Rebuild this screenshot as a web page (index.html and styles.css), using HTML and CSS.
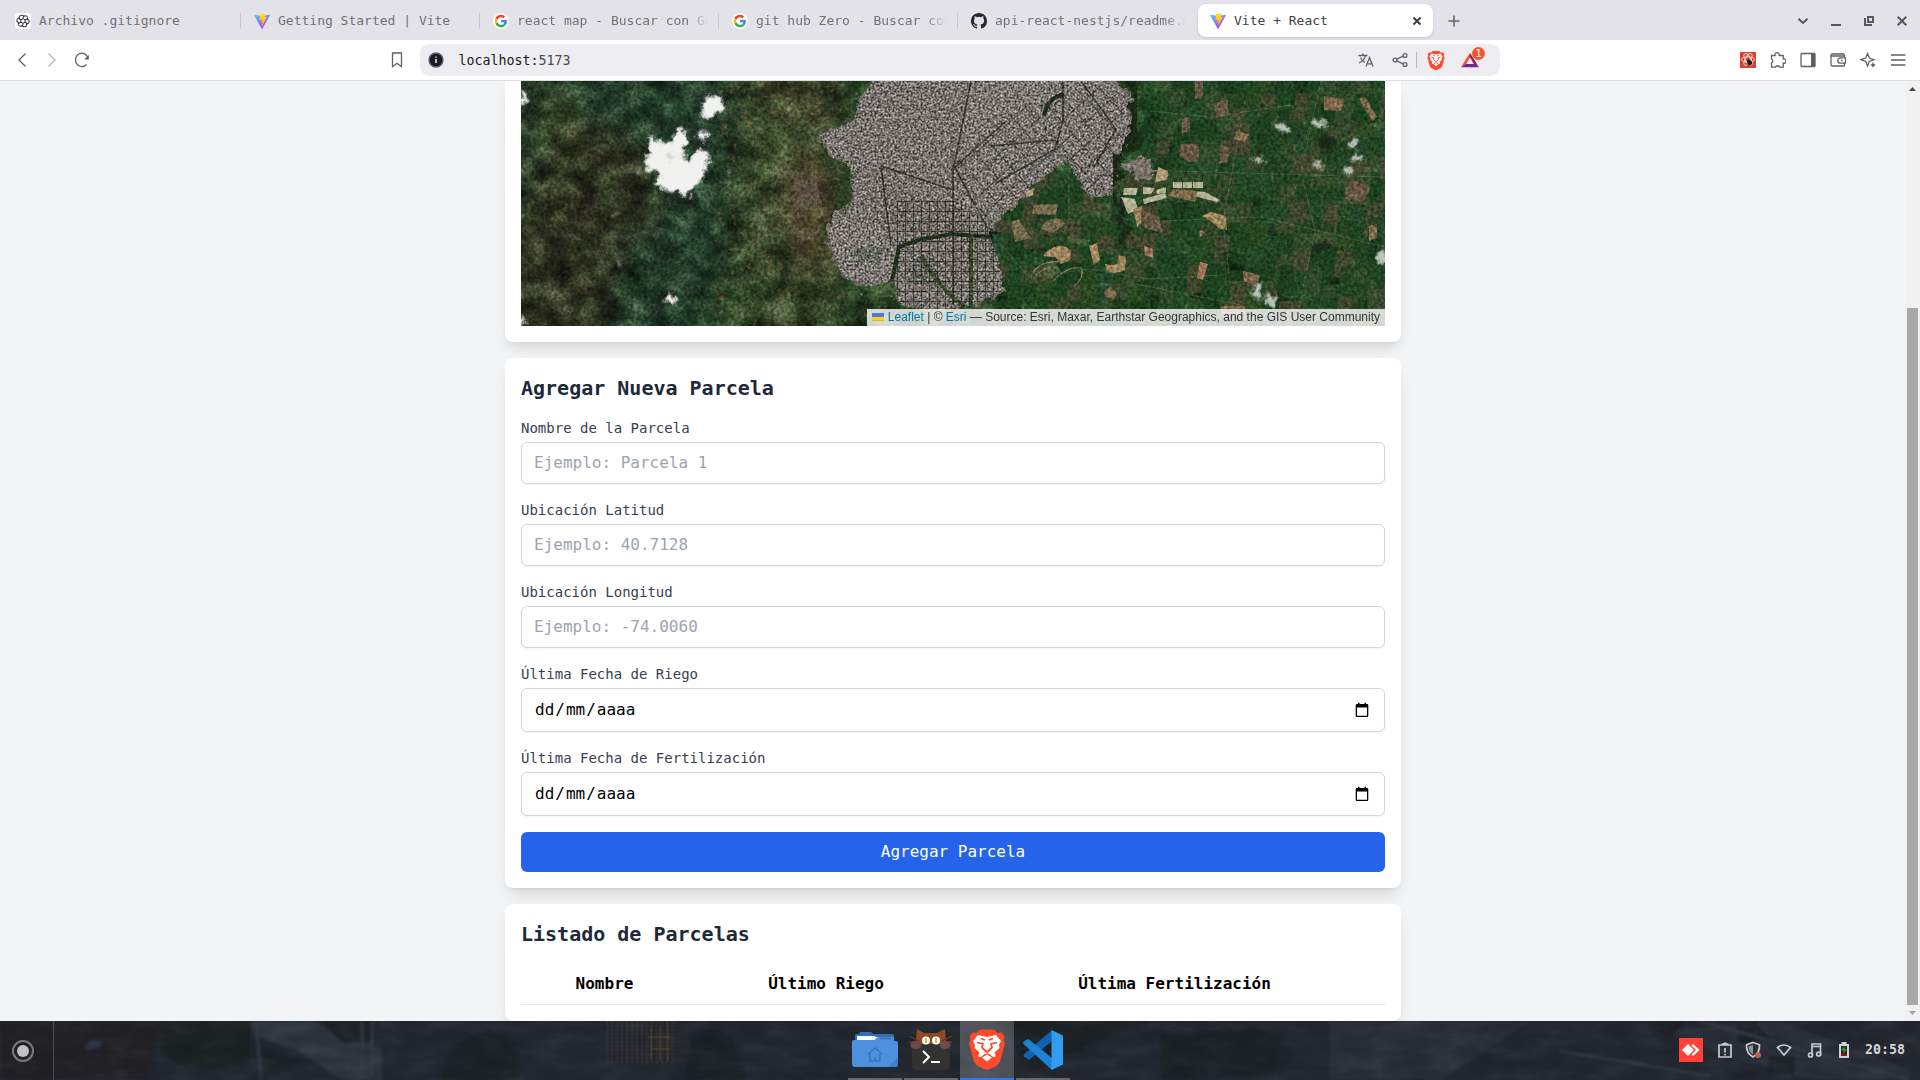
FILE: index.html
```html
<!DOCTYPE html>
<html lang="es">
<head>
<meta charset="utf-8">
<title>Vite + React</title>
<link rel="stylesheet" href="styles.css">
</head>
<body>
<svg class="defs" width="0" height="0" aria-hidden="true">
  <defs>
    <linearGradient id="viteA" x1="0" y1="0" x2="0.6" y2="1"><stop offset="0" stop-color="#41d1ff"/><stop offset="1" stop-color="#bd34fe"/></linearGradient>
    <linearGradient id="viteB" x1="0.5" y1="0" x2="0.5" y2="1"><stop offset="0" stop-color="#ffea83"/><stop offset="0.1" stop-color="#ffdd35"/><stop offset="1" stop-color="#ffa800"/></linearGradient>
    <symbol id="vite" viewBox="0 0 256 257">
      <path fill="url(#viteA)" d="M255.153 37.938L134.897 252.976c-2.483 4.44-8.862 4.466-11.382.048L.875 37.958c-2.746-4.814 1.371-10.646 6.827-9.67l120.385 21.517a6.537 6.537 0 0 0 2.322-.004l117.867-21.483c5.438-.991 9.574 4.796 6.877 9.62Z"/>
      <path fill="url(#viteB)" d="M185.432.063L96.44 17.501a3.268 3.268 0 0 0-2.634 3.014l-5.474 92.456a3.268 3.268 0 0 0 3.997 3.378l24.777-5.718c2.318-.535 4.413 1.507 3.936 3.838l-7.361 36.047c-.495 2.426 1.782 4.5 4.151 3.78l15.304-4.649c2.372-.72 4.652 1.36 4.15 3.788l-11.698 56.621c-.732 3.542 3.979 5.473 5.943 2.437l1.313-2.028l72.516-144.72c1.215-2.423-.88-5.186-3.54-4.672l-25.505 4.922c-2.396.462-4.435-1.77-3.759-4.114l16.646-57.705c.677-2.35-1.37-4.583-3.769-4.113Z"/>
    </symbol>
    <symbol id="google" viewBox="0 0 24 24">
      <circle cx="12" cy="12" r="12" fill="#fff"/>
      <g transform="translate(2.6 2.6) scale(.39)">
        <path fill="#ea4335" d="M24 9.500c3.540 0 6.710 1.220 9.210 3.600l6.850-6.850C35.900 2.380 30.470 0 24 0 14.620 0 6.510 5.380 2.560 13.220l7.980 6.190C12.430 13.720 17.740 9.500 24 9.500z"/>
        <path fill="#4285f4" d="M46.980 24.550c0-1.570-.15-3.090-.38-4.550H24v9.020h12.940c-.58 2.960-2.260 5.480-4.780 7.180l7.730 6c4.510-4.180 7.090-10.360 7.090-17.650z"/>
        <path fill="#fbbc05" d="M10.530 28.590c-.48-1.450-.76-2.990-.76-4.590s.27-3.140.76-4.590l-7.980-6.190C.92 16.460 0 20.120 0 24s.92 7.540 2.560 10.780z"/>
        <path fill="#34a853" d="M24 48c6.480 0 11.930-2.130 15.890-5.810l-7.730-6c-2.150 1.450-4.920 2.300-8.160 2.300-6.260 0-11.570-4.220-13.470-9.910l-7.980 6.190C6.510 42.620 14.620 48 24 48z"/>
      </g>
    </symbol>
    <symbol id="lion" viewBox="0 0 36 40">
      <path fill="#ff4a2b" d="M11 0h14l3.500 3.500 4-.5 3 4-1 3.500L36 14l-5 18-3 4-8 4h-4l-8-4-3-4L0 14l1.500-3.500-1-3.500 3-4 4 .5z"/>
      <path fill="#fff" d="M9 5.500l9 2 9-2 5 6-2 4 .5 3-5 4.500 1.500 4-3 .5-4-3.500-2 .8-2-.8-4 3.500-3-.5 1.500-4-5-4.500.5-3-2-4zM18 25l5 3-5 4-5-4z"/>
      <path fill="none" stroke="#ff4a2b" stroke-width="1.800" d="M8 13l6 1.500-1 3.500 4 4h2l4-4-1-3.500 6-1.500M12 9l4 1.500M24 9l-4 1.500M18 22v2"/>
    </symbol>
    <symbol id="calendar" viewBox="0 0 16 16">
      <path fill="#000" d="M13 2h-1V.8h-1.500V2h-5V.8H4V2H3a1.300 1.300 0 0 0-1.300 1.300V13.700A1.300 1.300 0 0 0 3 15h10a1.300 1.300 0 0 0 1.300-1.300V3.300A1.300 1.300 0 0 0 13 2zm0 11.700H3V5.500h10z"/>
    </symbol>
  </defs>
</svg>

<header class="tabbar">
  <div class="tab"><svg class="favicon" viewBox="0 0 16 16"><rect width="16" height="16" rx="3" fill="#fff"/><g fill="none" stroke="#2c2c2c" stroke-width="1"><path id="petal" d="M8 5.600V3.900L9.800 2.800Q12 2.200 12.600 4.500V7"/><use href="#petal" transform="rotate(60 8 8)"/><use href="#petal" transform="rotate(120 8 8)"/><use href="#petal" transform="rotate(180 8 8)"/><use href="#petal" transform="rotate(240 8 8)"/><use href="#petal" transform="rotate(300 8 8)"/><path d="M8 5.600l2.100 1.200v2.400L8 10.400 5.900 9.200V6.800z"/></g></svg><span class="tab-title">Archivo .gitignore</span></div>
  <div class="tab"><svg class="favicon"><use href="#vite"/></svg><span class="tab-title">Getting Started | Vite</span></div>
  <div class="tab"><svg class="favicon"><use href="#google"/></svg><span class="tab-title fade">react map - Buscar con Go</span></div>
  <div class="tab"><svg class="favicon"><use href="#google"/></svg><span class="tab-title fade">git hub Zero - Buscar con</span></div>
  <div class="tab last"><svg class="favicon" viewBox="0 0 16 16"><path fill="#24292f" d="M8 0C3.580 0 0 3.580 0 8c0 3.540 2.290 6.530 5.470 7.590.4.070.55-.17.55-.38 0-.19-.01-.82-.01-1.490-2.010.37-2.530-.49-2.690-.94-.09-.23-.48-.94-.82-1.130-.28-.15-.68-.52-.01-.53.63-.01 1.080.58 1.230.82.72 1.210 1.870.87 2.330.66.07-.52.28-.87.51-1.070-1.780-.2-3.640-.89-3.640-3.950 0-.87.31-1.590.82-2.150-.08-.2-.36-1.020.08-2.120 0 0 .67-.21 2.200.82a7.500 7.500 0 0 1 4 0c1.530-1.040 2.200-.82 2.200-.82.44 1.100.16 1.920.08 2.120.51.56.82 1.270.82 2.150 0 3.070-1.870 3.750-3.650 3.950.29.25.54.73.54 1.480 0 1.070-.01 1.930-.01 2.200 0 .21.15.46.55.38A8.010 8.010 0 0 0 16 8c0-4.420-3.580-8-8-8z"/></svg><span class="tab-title fade">api-react-nestjs/readme.m</span></div>
  <div class="tab active"><svg class="favicon"><use href="#vite"/></svg><span class="tab-title">Vite + React</span><svg class="tab-close" viewBox="0 0 10 10"><path d="M1.500 1.500l7 7M8.500 1.500l-7 7"/></svg></div>
  <svg class="new-tab" viewBox="0 0 12 12"><path d="M6 .5v11M.5 6h11"/></svg>
  <div class="window-controls">
    <svg viewBox="0 0 12 12"><path d="M1.500 3.800L6 8l4.500-4.200"/></svg>
    <svg viewBox="0 0 12 12"><path d="M1 10h10"/></svg>
    <svg viewBox="0 0 12 12"><path d="M5 2h5v5H5zM2 3v7h7" /></svg>
    <svg viewBox="0 0 12 12"><path d="M1.700 1.700l8.600 8.600M10.300 1.700l-8.600 8.600"/></svg>
  </div>
</header>

<nav class="toolbar">
  <div class="nav-buttons">
    <svg viewBox="0 0 16 16"><path d="M11.500 1.500L5 8l6.500 6.500"/></svg>
    <svg class="disabled" viewBox="0 0 16 16"><path d="M4.500 1.500L11 8l-6.500 6.500"/></svg>
    <svg viewBox="0 0 16 16"><path d="M14 6.500A6.300 6.800 0 1 0 12.500 12.500"/><path class="solid" d="M14.800 3v4.500h-4.500z"/></svg>
  </div>
  <svg class="bookmark" viewBox="0 0 16 16"><path d="M3.500 1h9v13.700L8 11.300l-4.500 3.400z"/></svg>
  <div class="address">
    <svg class="info" viewBox="0 0 16 16"><circle cx="8" cy="8" r="7" fill="#1b1b22"/><path d="M8 7v4M8 4.500v1.300" stroke="#ededf1" stroke-width="1.500"/></svg>
    <span class="url">localhost:<i>5173</i></span>
    <svg class="translate" viewBox="0 0 16 16"><path d="M.5 3.500h9M5 1.500v2M2.500 5.500c1 2.500 2.500 4 4.500 5M7.500 3.500C7 7 4.500 9.500 1 11M8 14.500l3.500-9 3.500 9M9.200 11.800h4.600"/></svg>
    <svg class="share" viewBox="0 0 16 16"><circle cx="3" cy="8" r="1.900"/><circle cx="13" cy="3.500" r="1.900"/><circle cx="13" cy="12.500" r="1.900"/><path d="M4.800 7.200l6.400-3M4.800 8.800l6.400 3"/></svg>
    <span class="address-divider"></span>
    <svg class="shield"><use href="#lion"/></svg>
    <span class="rewards"><svg viewBox="0 0 20 16"><path fill="#ff4724" d="M10 0L0 16l5.500-3L10 5z"/><path fill="#9e1f63" d="M10 0l10 16-5.500-3L10 5z"/><path fill="#662d91" d="M0 16h20l-5.500-3.500h-9z"/></svg><b>1</b></span>
  </div>
  <div class="extensions">
    <svg viewBox="0 0 16 16"><rect class="red" width="16" height="16"/><g class="atom"><ellipse cx="8" cy="7.500" rx="6.500" ry="2.700"/><ellipse cx="8" cy="7.500" rx="6.500" ry="2.700" transform="rotate(60 8 7.500)"/><ellipse cx="8" cy="7.500" rx="6.500" ry="2.700" transform="rotate(120 8 7.500)"/></g><path class="bug" d="M7 8.500l1.500-1.500 3.500 2.500v2.500l-2.500 2-2-1.500z"/></svg>
    <svg viewBox="0 0 16 16"><path d="M1.500 3.500H5a2.200 2.200 0 1 1 4.200 0h4V7a2.200 2.200 0 1 1 0 4.200v4H9.500a2.100 2.100 0 0 0-4 0h-4V11a2.200 2.200 0 0 0 0-4z"/></svg>
    <svg viewBox="0 0 16 16"><rect x="1" y="1.500" width="14" height="13" rx="1"/><path class="fill" d="M11 1.500h4v13h-4z"/></svg>
    <svg viewBox="0 0 16 16"><path d="M14.500 5V3.300A1.300 1.300 0 0 0 13.200 2H2.500A1.500 1.500 0 0 0 1 3.500v9A1.500 1.500 0 0 0 2.500 14h11a1 1 0 0 0 1-1v-1.500M1 4h13.500M15.500 5.800h-5a2.700 2.700 0 0 0 0 5.400h5zM11 8.500h1.500"/></svg>
    <svg viewBox="0 0 16 16"><path d="M7.500 1.500L9.300 6l4.700 1.700-4.700 1.800-1.800 4.500-1.700-4.500L1 7.700 5.800 6z"/><path class="fill" d="M13 10l.9 2.100L16 13l-2.100.9L13 16l-.9-2.100L10 13l2.100-.9z"/></svg>
    <svg viewBox="0 0 16 16"><path d="M1 3h14.500M1 8h14.500M1 13h14.500"/></svg>
  </div>
</nav>

<div class="viewport">
  <main class="page">
    <section class="card map-card">
      <div class="map">
        <svg id="terrain" viewBox="0 0 864 245" width="864" height="245">
          <defs>
            <filter id="grain" x="0" y="0" width="100%" height="100%" color-interpolation-filters="sRGB"><feTurbulence type="fractalNoise" baseFrequency=".3" numOctaves="3" seed="8"/><feColorMatrix values="0 1.300 0 0 -.17  0 1.300 0 0 -.17  0 1.300 0 0 -.17  0 0 0 0 1"/></filter>
            <filter id="hills" x="0" y="0" width="100%" height="100%" color-interpolation-filters="sRGB"><feTurbulence type="fractalNoise" baseFrequency=".04 .05" numOctaves="5" seed="21"/><feColorMatrix values=".2 1.400 0 0 -.3  0 1.500 0 0 -.22  .1 1.300 0 0 -.22  0 0 0 0 1"/></filter>
            <filter id="block" x="0" y="0" width="100%" height="100%" color-interpolation-filters="sRGB"><feTurbulence type="fractalNoise" baseFrequency=".5" numOctaves="2" seed="4"/><feColorMatrix values="0 1.400 0 0 -.2  0 1.400 0 0 -.21  0 1.400 0 0 -.22  0 0 0 0 1"/></filter>
            <filter id="rough" x="-5%" y="-5%" width="110%" height="110%" color-interpolation-filters="sRGB"><feTurbulence type="fractalNoise" baseFrequency=".09" numOctaves="4" seed="3"/><feDisplacementMap in="SourceGraphic" scale="20" xChannelSelector="R" yChannelSelector="G"/></filter>
            <filter id="cloud" x="-5%" y="-5%" width="110%" height="110%" color-interpolation-filters="sRGB"><feTurbulence type="fractalNoise" baseFrequency=".13" numOctaves="4" seed="12" result="n"/><feGaussianBlur in="SourceGraphic" stdDeviation="1.500"/><feDisplacementMap in2="n" scale="12" xChannelSelector="R" yChannelSelector="G"/></filter>
            <filter id="soft" x="-30%" y="-30%" width="160%" height="160%" color-interpolation-filters="sRGB"><feGaussianBlur stdDeviation="14"/></filter>
            <clipPath id="city"><path d="M351 0L339 20 332 40 299 54 312 77 329 84 330 120 312 134 307 154 314 177 322 197 349 205 372 200 379 224 422 229 452 224 482 210 477 177 467 150 496 120 509 107 546 77 559 100 569 117 592 114 594 84 607 64 611 17 589 0z"/></clipPath>
            <pattern id="gridA" width="9" height="7" patternUnits="userSpaceOnUse" patternTransform="rotate(3)"><path d="M0 0H9M0 0V7" stroke="#2d2c26" stroke-width=".8" opacity=".55"/></pattern>
            <pattern id="gridB" width="17" height="17" patternUnits="userSpaceOnUse" patternTransform="rotate(-42)"><path d="M0 0H17M0 0V17" stroke="#292c24" stroke-width="1.500" opacity=".8"/></pattern>
            <pattern id="gridC" width="8" height="10" patternUnits="userSpaceOnUse"><path d="M0 0H8M0 0V10" stroke="#22251e" stroke-width="1.800" opacity=".75"/></pattern>
          </defs>
          <rect width="864" height="245" fill="#263a22"/>
          <g filter="url(#soft)">
            <path fill="#23392a" d="M0-20h220v170l-40 110H0z"/>
            <path fill="#2d2e20" d="M60 40l60 20 20 60-40 60-20 80H-30V150z"/>
            <path fill="#37452b" d="M215 0h110l-10 245H210z"/>
            <path fill="#4c432e" d="M265 60l50 30-10 120-50-50z"/>
            <path fill="#234324" d="M620-20h264v290H480l20-140z"/>
            <path fill="#5a4733" d="M210-20h60l50 60-40 10z" opacity=".5"/>
            <path fill="#57523b" d="M745 60l110-20v130l-90-10z" opacity=".6"/>
            <path fill="#4b5430" d="M20 10h35L40 90 20 70z" opacity=".8"/>
          </g>
          <rect width="864" height="245" filter="url(#hills)" class="blend-soft hills"/>
          <g id="fields"></g>
          <g filter="url(#rough)">
            <path fill="#776c63" d="M351 0L339 20 332 40 299 54 312 77 329 84 330 120 312 134 307 154 314 177 322 197 349 205 372 200 379 224 422 229 452 224 482 210 477 177 467 150 496 120 509 107 546 77 559 100 569 117 592 114 594 84 607 64 611 17 589-8H351z"/>
            <path fill="#7c766c" d="M602 84l14-9 16 4v15l-16 6z"/>
            <path fill="#66594e" d="M270 95l25-2 5 30-26 12z" opacity=".7"/>
            <path fill="#263920" d="M329 170l25-6 14 5-5 12-27 3zM388 182l22-3 10 18-18 12-12-6z"/>
            <path fill="#665647" d="M355 90l40 8 6 50-36 6-18-24zM378 130l50-6 30 20-4 60-50-8z" opacity=".7"/>
            <path fill="#2c4021" d="M318 92l14-4v34l-16 22z"/>
          </g>
          <g clip-path="url(#city)">
            <path d="M325 0h120v150H325z" fill="url(#gridA)"/>
            <path d="M434 87l54-60 110-27 10 110-90 20-40 30z" fill="url(#gridB)"/>
            <path d="M375 120h60l45 30v90H375z" fill="url(#gridC)"/>
            <path d="M450 0L433 85M433 85l34 63M542 0v40l-8 28-60 35M560 0l35 48-22 38M432 85v140M434 86l50-45M360 85l72 24M360 85l10 80M470 65l64-6" fill="none" stroke="#24271d" stroke-width="1.600" opacity=".8"/>
            <path d="M370 205l8-39 23-8 30-5 37 3M523 35q3-18 20-22" fill="none" stroke="#21311c" stroke-width="4"/>
            <path d="M400 175q20 35 45 52M450 155v70" fill="none" stroke="#2b3b1f" stroke-width="4" opacity=".8"/>
            <rect width="864" height="245" filter="url(#block)" class="blend-overlay city-noise"/>
          </g>
          <path d="M611 0q7 20 1 40l-3 24q-14 12-12 22l-3 25 9 24-1 30" fill="none" stroke="#1b2818" stroke-width="6" filter="url(#rough)"/>
          <path d="M382 200l25 10 30 18" fill="none" stroke="#85766b" stroke-width="2"/>
          <g fill="#b3b496">
            <path d="M603 107l14 0-2 7h-13zM622 106l12 1-4 6h-8zM635 109l10-3v6l-9 1zM652 101h9v6h-9zM662 101h9v6h-9zM672 101h10v6h-10zM662 109l22 2 15 8-3 2-34-9zM600 116l14 2 3 10-10 5zM622 118l22-6 2 5-23 6z"/>
            <path fill="#b09b76" d="M637 86l10 4-1 9-12 2zM505 111l8-4-1 7-7 2z"/>
          </g>
          <g>
            <path fill="#766b4d" d="M513 124l24-1-2 11-24-1zM523 142q14-10 22 1l-14 9-10-4zM490 141l8-3 12 19-16 4z"/>
            <path fill="#a0875f" d="M525 171q15-12 25-1l-1 9-9 4-6-7-12-1zM568 165l8-3 3 17-6 5zM584 183q8 2 12 0l2-9 7 2-1 13q-12 6-19 0zM612 128l9-3-1 17-4 4zM681 135l9-4 15 4 1 14-7-1-9-8z"/>
            <path fill="#806a49" d="M676 110l-2 11-27-6 5-7z"/>
            <path fill="#b88261" d="M679 181l8 2-5 16-6-2z" opacity=".85"/>
            <path fill="#80694d" d="M803 15l20 3-3 12-17-1zM838 18l6-2 12 20-5 4zM715 50l13 3-4 8-11-3zM583 212l6-7 7 8-3 5-8-2zM700 225h24v8h-24zM848 145l8-2v14l-8 3zM722 190l17 4-3 9-13-2z"/>
            <path fill="#665845" d="M660 63h18v17l-10 1-10-6zM700 64l8 2-1 15-9 2zM825 105l8-6 16 8-8 14-17-3zM674 0h8v17l-8 1zM661 38l8-2v14l-8 2zM693 22l14-4v16l-12 3zM620 128l18 8 4 16-18-5z"/>
            <path fill="#9a7558" d="M623 165l9 3v9l-8-3zM679 156l-1-7 6 2z"/>
            <path fill="#4e6440" d="M546 155l24 4-6 6-17-5zM523 184l12-3 4 10-10 8-8-5z" opacity=".8"/>
            <path fill="none" stroke="#7b7457" stroke-width="1.300" d="M510 198q2-14 20-17l17-1M532 200q14-15 28-13 4 10-7 18M515 194q10-9 21-8"/>
            <path fill="none" stroke="#6c7855" stroke-width=".7" opacity=".65" d="M548 80v60l-12 25M470 152l38 44 60-8 60 10 74-4M630 30l60 6 80-12M640 140l100-4 124 30M724 20l-22 120 10 90M800 0l-20 90 14 60-20 95M600 200l150 30M648 90l216 6"/>
          </g>
          <rect width="864" height="245" filter="url(#grain)" class="blend-overlay light"/>
          <g id="specks"></g>
          <g filter="url(#cloud)" fill="#151f16" opacity=".7"><path d="M137 102l40 12-3 7-32-4zM172 60l16-8v12l-14 5zM795 60l12-8 8 8-8 14zM140 215l12-4 6 10z"/></g>
          <g filter="url(#cloud)" fill="#f1f1ef">
            <path d="M129 54l15 9 7-3 9-16 8 20-8 8 8 10 10-16 11 10-8 22-15 18-17-6-17-7 9-11-17-5z"/>
            <path d="M182 18l13-4 7 4-1 14-8 1-7 5-5-5zM177 49l10 3-1 9-7-2zM149 212l6 6-3 6-6-5z"/>
            <path d="M0 10h5v14l-6 4zM0 232l4 6-3 9h-4z"/>
            <g opacity=".75"><path d="M756 41l8 1 4 8-6 3-8-6zM793 37l9 2 6 6-8 2-8-4zM732 74l12 4-4 4-8-3zM832 57l6 6-4 6-6-5zM834 72l8 4-4 5-7-2zM824 84l9 6-5 4-6-4zM733 205l6-3 3 8-6 11-5-8zM746 212l10 7-3 9-9-5zM855 173l10-5v14l-8 2zM792 80l10 2-3 4-8-2z"/></g>
          </g>
          <g filter="url(#cloud)" fill="#c2c3bf" opacity=".6"><path d="M150 70l4 5-6 5-3-4zM115 88l5-2-2 7-5-1zM22 104l7 1-5 3zM90 134l9-1-5 4zM97 178l5 5-5 3zM134 150l4 3-3 3z"/></g>
        </svg>
        <div class="attribution"><svg viewBox="0 0 12 8"><path fill="#4c7be1" d="M0 0h12v4H0z"/><path fill="#ffd500" d="M0 4h12v3H0z"/><path fill="#e0bc00" d="M0 7h12v1H0z"/></svg> <a>Leaflet</a> <span>|</span> © <a>Esri</a> — Source: Esri, Maxar, Earthstar Geographics, and the GIS User Community</div>
      </div>
    </section>

    <section class="card">
      <h2>Agregar Nueva Parcela</h2>
      <form class="form">
        <div class="field"><label for="n">Nombre de la Parcela</label><input id="n" type="text" placeholder="Ejemplo: Parcela 1"></div>
        <div class="field"><label for="lat">Ubicación Latitud</label><input id="lat" type="text" placeholder="Ejemplo: 40.7128"></div>
        <div class="field"><label for="lon">Ubicación Longitud</label><input id="lon" type="text" placeholder="Ejemplo: -74.0060"></div>
        <div class="field"><label>Última Fecha de Riego</label><div class="date"><span><i>dd</i>/<i>mm</i>/<i>aaaa</i></span><svg><use href="#calendar"/></svg></div></div>
        <div class="field"><label>Última Fecha de Fertilización</label><div class="date"><span><i>dd</i>/<i>mm</i>/<i>aaaa</i></span><svg><use href="#calendar"/></svg></div></div>
        <button type="button">Agregar Parcela</button>
      </form>
    </section>

    <section class="card">
      <h2>Listado de Parcelas</h2>
      <table>
        <colgroup><col class="c1"><col class="c2"><col class="c3"></colgroup>
        <thead><tr><th>Nombre</th><th>Último Riego</th><th>Última Fertilización</th></tr></thead>
      </table>
    </section>
  </main>
  <div class="scrollbar">
    <svg viewBox="0 0 15 16"><path d="M4 10l3.500-4L11 10z" fill="#444"/></svg>
    <div class="thumb"></div>
    <svg viewBox="0 0 15 16"><path d="M4 6l3.500 4L11 6z" fill="#a3a3a3"/></svg>
  </div>
</div>

<footer class="taskbar">
  <svg class="wallpaper" viewBox="0 0 1920 59" width="1920" height="59" preserveAspectRatio="none">
    <defs>
      <filter id="paint" x="0" y="0" width="100%" height="100%" color-interpolation-filters="sRGB"><feTurbulence type="fractalNoise" baseFrequency=".03 .08" numOctaves="5" seed="7"/><feColorMatrix values="0 1 0 0 -.02  0 1 0 0 -.02  0 1 0 0 -.02  0 0 0 0 1"/></filter>
      <filter id="blur3"><feGaussianBlur stdDeviation="1.500"/></filter>
      <pattern id="weave" width="5" height="4" patternUnits="userSpaceOnUse"><path d="M0 1h4M2 0v4" stroke="#94602a" stroke-width=".8"/></pattern>
    </defs>
    <rect width="1920" height="59" fill="#232730"/>
    <g filter="url(#blur3)">
      <path fill="#202225" d="M0 0h165l-20 59H0z"/><path fill="#1e2123" d="M165 0h85v40l-60 10-30-20z"/>
      <path fill="#2d343d" d="M252 0h60l70 28v31h-40l-45-30-45-15z"/><path fill="#1f2225" d="M318 0h55v22l-30 0zM440 59q10-50 50-50 30 5 30 50zM252 22l60 18-40 10zM690 10q30-10 45 10l10 39h-60zM1000 0h150l-40 18-80 30zM1160 10l130-5-20 50-110 4z"/>
      <path fill="#292f38" d="M1330 0h200l-90 59h-110zM1660 10l120-10 130 49v10h-90l-80-20z"/><path fill="#1e2128" d="M1640 0h45l-15 18zM1735 0h20l15 18-30 5zM1770 35h25v20h-30z"/>
      <path stroke="#343c46" stroke-width="2" d="M256 0l5 59M362 0v55M372 0v55M1700 0l210 59M1560 30l150 25" fill="none"/>
      <path fill="#2b3642" d="M84 26l7-7 12 1-3 6-12 3z"/>
    </g>
    <rect width="1920" height="59" filter="url(#paint)" class="blend-soft faint"/>
    <rect x="606" y="0" width="70" height="44" fill="url(#weave)" opacity=".2"/>
    <path d="M651 6v32M660 4v36M668 2v38M648 16h22M650 28h20" stroke="#8b5a26" opacity=".5"/>
  </svg>
  <div class="launcher"><svg viewBox="0 0 24 24"><circle cx="12" cy="12" r="10" fill="none" stroke="#77797c" stroke-width="2"/><circle cx="12" cy="12" r="6" fill="#bfc1c3"/></svg></div>
  <div class="apps">
    <div class="app"><svg width="46" height="36" viewBox="0 0 46 36"><path fill="#336eb4" d="M3 9V4q0-2 2-2h2l1-2h11l2 2h19q2 0 2 2v6z"/><path fill="#fff" d="M5 4h17l2 1h17v5H5z"/><path fill="#4c90df" d="M2 8h20l4-3h16v4h2q2 0 2 2v21q0 3-3 3H3q-3 0-3-3V10q0-2 2-2z"/><path d="M28 6.500h11" stroke="#336eb4" stroke-width="1.500"/><g fill="none" stroke="#3775bd" stroke-width="1.500"><path d="M15.500 22.500L23 16l7.500 6.500M18 21v8h10v-8M23 29v-4"/></g><path fill="#3d7fce" d="M46 25v7q0 3-3 3h-7z"/></svg></div>
    <div class="app"><svg width="44" height="42" viewBox="0 0 44 42"><path fill="#8d4b25" d="M8 0l7 4h13l8-4 1 12q2 4-1 6H8q-3-3-1-7z"/><path d="M0 7l10 5M0 13h9M2 19l7-5M43 7l-10 5M43 13h-9M41 19l-7-5" stroke="#6b3519" stroke-width="1.300"/><rect x="3" y="15" width="38" height="26" rx="4" fill="#323232"/><ellipse cx="7" cy="16" rx="5.500" ry="4" fill="#6a4c4a"/><ellipse cx="36" cy="16" rx="5.500" ry="4" fill="#6a4c4a"/><circle cx="17" cy="11.500" r="4" fill="#fff"/><circle cx="27" cy="11.500" r="4" fill="#fff"/><path d="M17 9v5M27 9v5" stroke="#bda41c" stroke-width="1.500"/><path d="M14 22l6 6-6 6M22 33h9" fill="none" stroke="#fff" stroke-width="1.900"/></svg></div>
    <div class="app current"><svg width="36" height="41"><use href="#lion"/></svg></div>
    <div class="app"><svg width="40" height="40" viewBox="0 0 40 40"><path fill="#1261b3" d="M29 0v11L6 30 1 26.500q-1-1 0-2z"/><path fill="#1c82d6" d="M6 9.500L29 28v12L0 13.500q0-1 1-2l3-2q1-.6 2 0z"/><path fill="#319cf0" d="M28.500 0L40 5.500v29L28.500 40z"/></svg></div>
  </div>
  <div class="tray">
    <svg width="24" height="24" viewBox="0 0 24 24"><path fill="#ff4136" d="M0 0h24v24H0z"/><path fill="#fff" d="M3 12l6-6 6 6-6 6zM12.500 7.500L14 6l6.500 6-6.500 6-1.500-1.500L17 12z"/></svg>
    <svg width="16" height="18" viewBox="0 0 16 18"><path d="M2 4h12v12H2zM8 7v4.500M8 12.800v1.700M5.500 4.200V3H7q1-2 2 0h1.500v1.200" /></svg>
    <svg width="18" height="18" viewBox="0 0 18 18"><path d="M9 1.500l6.500 2.300q.5 8.500-6.500 12.200Q2 12.300 2.500 3.800z"/><path class="solid" d="M9 4l-4.500 1.500q0 5.500 4.500 8z"/><circle cx="14" cy="14" r="3" class="alert"/></svg>
    <svg width="16" height="16" viewBox="0 0 16 16"><path d="M1.500 5.500Q8 .5 14.500 5.500L8 13z"/></svg>
    <svg width="16" height="16" viewBox="0 0 16 16"><path d="M5 13V2h8.500v10M5 4.500h8.500"/><circle cx="3.500" cy="13" r="2"/><circle cx="11.700" cy="12" r="2"/></svg>
    <svg width="12" height="18" viewBox="0 0 12 18"><path fill="#d0d2d2" stroke="none" d="M3.500 1h5v2H11v14H1V3h2.500z"/><path stroke="none" fill="#282b2b" d="M3 5h6v8H3z"/><path stroke="none" fill="#a50d0d" d="M3 13h6v2H3z"/><path stroke="none" fill="#2ba027" d="M7 5l-4 4.500h3L5 13l4-5H6.500z"/></svg>
    <time>20:58</time>
  </div>
</footer>
<script src="terrain.js"></script>
</body>
</html>
```
FILE: styles.css
```css
* { box-sizing: border-box; }
body { margin: 0; width: 1920px; height: 1080px; overflow: hidden; display: flex; flex-direction: column; font-family: "DejaVu Sans Mono", monospace; background: #f3f4f6; }
svg { display: block; flex: none; }
i { font-style: normal; }
.defs { position: absolute; }

.tabbar { flex: none; height: 40px; padding-top: 1px; display: flex; align-items: center; background: #e3e2e8; }
.tab { width: 239px; height: 16px; padding-left: 13px; display: flex; align-items: center; gap: 8px; font-size: 13px; line-height: 16px; color: #717177; border-right: 1px solid #c9c8ce; }
.tab:first-child { width: 241px; padding-left: 15px; }
.tab.last { border: 0; width: 241px; }
.favicon { width: 16px; height: 16px; }
.tab-title { flex: none; white-space: nowrap; width: 197px; }
.fade { -webkit-mask-image: linear-gradient(90deg, #000 86%, transparent 97%); mask-image: linear-gradient(90deg, #000 86%, transparent 97%); }
.tab.active { width: 235px; height: 33px; margin-left: -1px; padding: 0 11px 0 12px; background: #fff; border: 0; border-radius: 8px; color: #3e3f45; box-shadow: 0 1px 3px #0002; }
.active .tab-title { flex: 1; }
.tab-close { width: 10px; height: 10px; fill: none; stroke: #3b3c42; stroke-width: 2; }
.new-tab { width: 12px; height: 12px; margin-left: 15px; stroke: #67686e; stroke-width: 1.6; }
.window-controls { margin-left: auto; padding-right: 12px; display: flex; gap: 21px; fill: none; stroke: #56575d; stroke-width: 2; }
.window-controls svg { width: 12px; height: 12px; }

.toolbar { flex: none; height: 41px; display: flex; align-items: center; background: #fff; border-bottom: 1px solid #dcdce1; fill: none; stroke: #5f6067; stroke-width: 1.3; }
.toolbar svg { width: 16px; height: 16px; }
.nav-buttons { width: 389px; padding-left: 14px; display: flex; gap: 14px; }
.disabled { opacity: .45; }
.solid { fill: #5f6067; stroke: none; }
.bookmark { margin-right: 15px; }
.address { width: 1080px; height: 32px; padding: 0 15px 0 8px; display: flex; align-items: center; background: #ededf1; border-radius: 9px; }
.url { margin-left: 14.5px; margin-right: auto; font-size: 13.3px; color: #1b1b22; }
.url i { color: #4a4a52; }
.share { margin: 0 8px 0 18px; }
.address-divider { width: 1px; height: 16px; background: #b6b6bd; margin: 0 10px 0 0; }
.toolbar .shield { width: 18px; height: 19px; stroke: none; }
.rewards { position: relative; width: 24px; margin-left: 16px; }
.toolbar .rewards svg { width: 18px; height: 16px; stroke: none; }
.rewards b { position: absolute; right: 0; top: -5px; width: 13px; height: 13px; border-radius: 50%; background: #fb542b; color: #fff; font: 10px/13px "DejaVu Sans Mono", monospace; text-align: center; }
.extensions { margin-left: auto; padding-right: 14px; display: flex; gap: 14px; }
.extensions .fill { fill: #5f6067; stroke: none; }
.extensions .red { fill: #d8432f; stroke: none; }
.extensions .atom { stroke: #f6d5cf; stroke-width: 1; }
.extensions .bug { fill: #22191a; stroke: none; }

.viewport { flex: none; height: 940px; display: flex; overflow: hidden; background: #f3f4f6; }
.page { flex: 1; padding-left: 505px; display: flex; flex-direction: column; gap: 16px; }
.card { flex: none; width: 896px; padding: 16px; background: #fff; border-radius: 8px; box-shadow: 0 10px 15px -3px #0000001a, 0 4px 6px -4px #0000001a; }
.map-card { padding-top: 0; border-radius: 0 0 8px 8px; }
.map { position: relative; height: 245px; overflow: hidden; isolation: isolate; }
.blend-overlay { mix-blend-mode: overlay; }
.blend-soft { mix-blend-mode: soft-light; }
.light { opacity: .45; }
.hills { opacity: .75; }
.city-noise { opacity: .7; }
.faint { opacity: .2; }
.attribution { position: absolute; right: 0; bottom: 0; padding: 0 5px; background: #fffc; color: #333; font: 12px/17px "Liberation Sans", Arial, sans-serif; white-space: nowrap; }
.attribution svg { display: inline; width: 12px; height: 8px; }
.attribution a { color: #0078a8; }
h2 { margin: 0 0 16px; font-size: 20px; line-height: 28px; color: #1f2937; }
.form { display: flex; flex-direction: column; gap: 16px; }
.field { display: flex; flex-direction: column; gap: 4px; }
label { font-size: 14px; line-height: 20px; color: #374151; }
input, .date { width: 100%; height: 42px; padding: 7px 12px 9px; border: 1px solid #d1d5db; border-radius: 6px; background: #fff; box-shadow: 0 1px 2px #0000000d; font: 16px/24px "DejaVu Sans Mono", monospace; }
input::placeholder { color: #9ca3af; opacity: 1; }
.date { height: 44px; padding: 0 14px 0 12px; display: flex; justify-content: space-between; align-items: center; }
.date i { padding: 0 1px; }
.date svg { width: 16px; height: 16px; }
button { height: 40px; border: 0; border-radius: 6px; background: #2563eb; color: #fff; font: 16px/24px "DejaVu Sans Mono", monospace; }
table { width: 100%; border-collapse: collapse; table-layout: fixed; }
.c1 { width: 167px; } .c2 { width: 276px; } .c3 { width: 421px; }
th { padding: 8px 16px; font-size: 16px; line-height: 24px; border-bottom: 1px solid #e5e7eb; }
.scrollbar { width: 15px; display: flex; flex-direction: column; background: #f1f1f1; }
.scrollbar svg { width: 15px; height: 16px; }
.thumb { width: 11px; margin: 211px 2px 0; flex: 1; background: #a8a8a8; }

.taskbar { flex: none; height: 59px; position: relative; isolation: isolate; display: grid; grid-template-columns: 848px 1fr auto; background: #232730; }
.wallpaper { position: absolute; inset: 0; z-index: -1; }
.launcher { width: 54px; padding-left: 11px; display: flex; align-items: center; border-right: 1px solid #4a4c50; }
.launcher svg { width: 24px; height: 24px; }
.apps { display: flex; gap: 2px; }
.app { width: 54px; height: 59px; display: flex; align-items: center; justify-content: center; border-bottom: 2px solid #67696d; }
.app.current { background: #ffffff33; border-color: #2c7be5; }
.tray { display: flex; align-items: center; padding: 0 15px 2px 0; fill: none; stroke: #c9cbcd; stroke-width: 1.7; }
.tray svg { margin-right: 15px; }
.tray svg:first-child { stroke: none; margin-right: 14px; }
.tray svg:nth-child(2) { margin-right: 11px; }
.tray svg:nth-child(3) { margin-right: 14px; }
.tray .solid { fill: #8e9499; }
.tray .alert { fill: #c4643a; stroke: none; }
time { font-size: 13.3px; font-weight: bold; color: #d3d5d7; }
```
FILE: terrain.js
```js
// Deterministic farmland patchwork and bright rooftops for the satellite map.
let seed = 77;
const rnd = () => (seed = (seed * 16807) % 2147483647) / 2147483647;
const make = (parent, points, fill, opacity) => {
  const p = document.createElementNS("http://www.w3.org/2000/svg", "polygon");
  p.setAttribute("points", points);
  p.setAttribute("fill", fill);
  p.setAttribute("opacity", opacity);
  parent.appendChild(p);
};
const fields = document.getElementById("fields");
const greens = ["#1d421f", "#19391b", "#2c4a23", "#354c2d", "#3c4a2d", "#1f4520", "#484832", "#24442300", "#204222", "#24482a"];
for (let x = 470; x < 870; x += 15) {
  for (let y = -8; y < 250; y += 16) {
    if (x < 610 && y < 75) continue;
    const w = 13 + rnd() * 14, h = 12 + rnd() * 18, k = 3 - rnd() * 5;
    const a = x + rnd() * 6, b = y + rnd() * 6;
    make(fields, `${a},${b} ${a + w},${b + k} ${a + w - 3},${b + h} ${a - 3},${b + h - k}`, greens[Math.floor(rnd() * greens.length)], 0.8);
  }
}
for (let n = 0; n < 420; n++) {
  const x = 190 + rnd() * 130, y = rnd() * 245, w = 2 + rnd() * 6, h = 1 + rnd() * 3;
  make(fields, `${x},${y} ${x + w},${y - h} ${x + w - 1},${y + h}`, ["#6a573c", "#3e5a27", "#1d321a", "#735f48"][Math.floor(rnd() * 4)], 0.45);
}
const specks = document.getElementById("specks");
for (let n = 0; n < 220; n++) {
  const x = 330 + rnd() * 270, y = rnd() * 225, s = 0.5 + rnd() * 1.4;
  if (x > 465 && y > 75) continue;
  make(specks, `${x},${y} ${x + s},${y} ${x + s},${y + s} ${x},${y + s}`, ["#d4ccc0", "#a2745e", "#b9b0a4"][Math.floor(rnd() * 3)], 0.7);
}
```
